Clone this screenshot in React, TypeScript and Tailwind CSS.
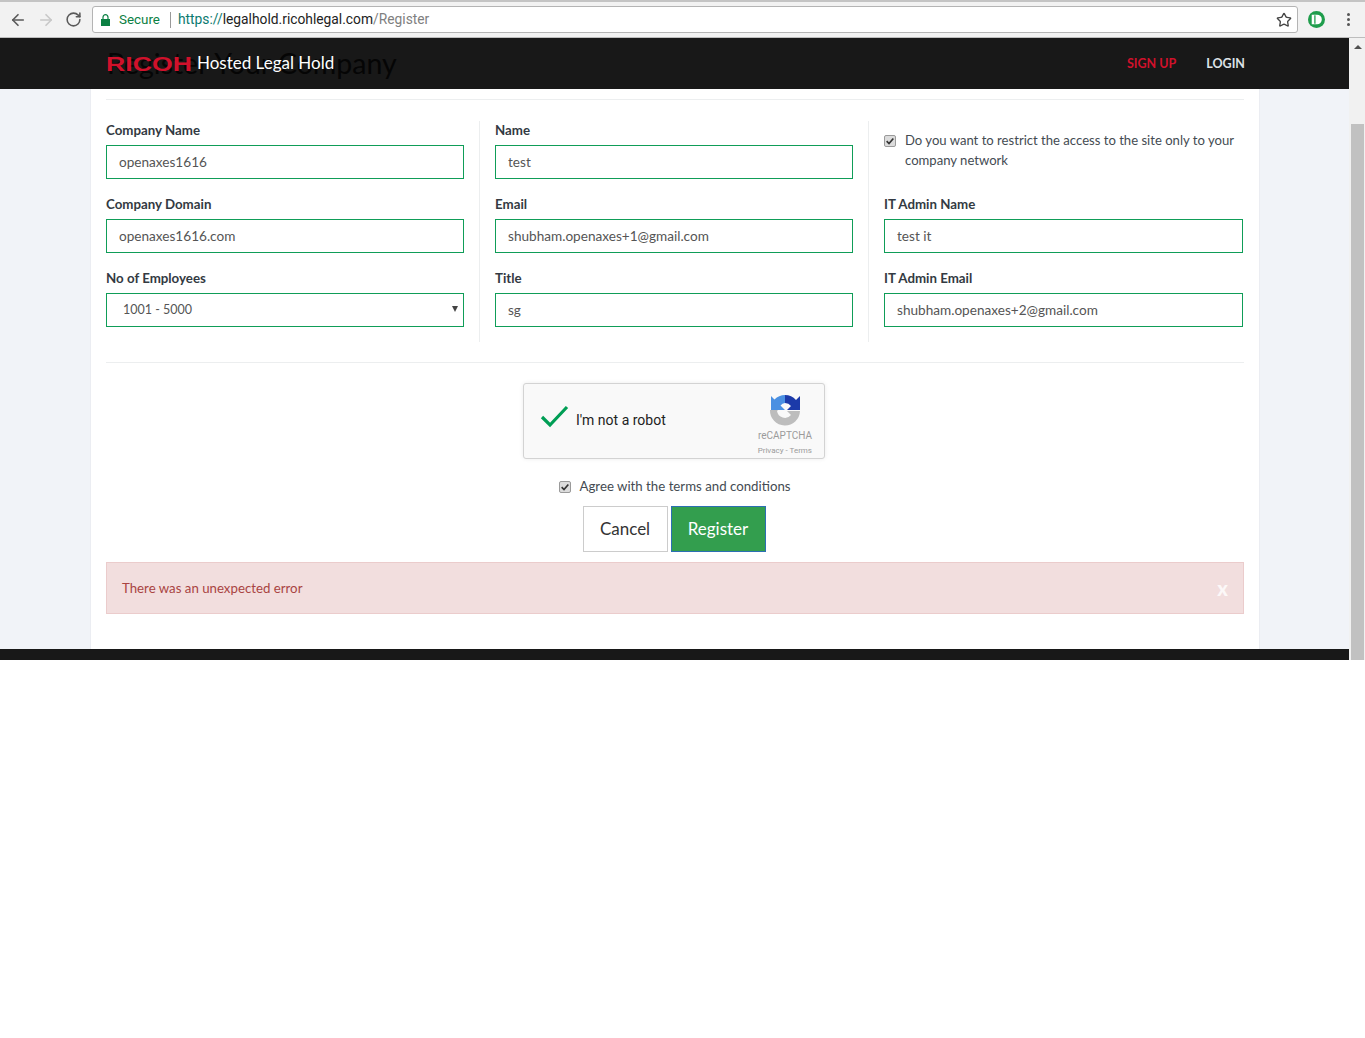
import React from 'react'
import { ArrowLeft, ArrowRight, RotateCw, Star } from 'lucide-react'

type FieldProps = {
  label: string
  value: string
}

const Field: React.FC<FieldProps> = ({ label, value }) => (
  <div className="h-[74px]">
    <label className="block h-[24px] text-[13.3px] leading-[18px] font-bold text-[#333a42]">{label}</label>
    <input
      readOnly
      value={value}
      className="block w-full h-[34px] border border-[#0f9d58] px-3 text-[13.6px] text-[#555] outline-none"
    />
  </div>
)

const Tick = () => (
  <span className="flex items-center justify-center w-[12px] h-[12px] shrink-0 rounded-[2px] border border-[#9a9a9a] bg-[#dcdcdc]">
    <svg viewBox="0 0 12 12" className="w-[10px] h-[10px]">
      <path d="M2 6.2 4.800 9 10 3" fill="none" stroke="#333" strokeWidth="2" />
    </svg>
  </span>
)

const Chrome = () => (
  <div className="h-[38px] shrink-0 flex items-center bg-[#f2f2f2] border-t-2 border-t-[#c4c4c4] border-b border-b-[#bdbdbd] font-['Roboto',sans-serif]">
    <div className="flex items-center w-[92px] pl-[9px] gap-[10px] text-[#5a5a5a]">
      <ArrowLeft size={18} strokeWidth={2.2} />
      <ArrowRight size={18} strokeWidth={2.2} className="text-[#c8c8c8]" />
      <RotateCw size={17} strokeWidth={2.2} />
    </div>
    <div className="flex items-center w-[1206px] h-[27px] bg-white border border-[#b4b4b4] rounded-[3px] text-[13.8px]">
      <svg viewBox="0 0 9 12" className="ml-[8px] w-[9px] h-[12px]">
        <path d="M2 5V3.200a2.500 2.500 0 0 1 5 0V5" fill="none" stroke="#0b8043" strokeWidth="1.200" />
        <rect x="0" y="5" width="9" height="7" fill="#0b8043" />
      </svg>
      <span className="ml-[9px] pt-[1px] text-[13.4px] text-[#0b8043]">Secure</span>
      <span className="ml-[10px] mr-[7px] h-[16px] border-l border-[#999]" />
      <span className="text-[#0b7a6f]">https://</span>
      <span className="text-[#222]">legalhold.ricohlegal.com</span>
      <span className="text-[#808080]">/Register</span>
      <Star size={16} strokeWidth={2} className="ml-auto mr-[5px] text-[#444]" />
    </div>
    <svg viewBox="0 0 16 16" className="ml-[10px] w-[17px] h-[17px]">
      <circle cx="8" cy="8" r="8" fill="#1f9d4c" />
      <path d="M3.500 3.500H8.500a4.500 4.500 0 0 1 0 9H3.500z" fill="#fff" />
      <path d="M6.500 4v8" stroke="#1f9d4c" strokeWidth="1.200" />
    </svg>
    <div className="ml-[22px] flex flex-col gap-[2px]">
      <span className="w-[3px] h-[3px] rounded-full bg-[#555]" />
      <span className="w-[3px] h-[3px] rounded-full bg-[#555]" />
      <span className="w-[3px] h-[3px] rounded-full bg-[#555]" />
    </div>
  </div>
)

const Captcha = () => (
  <div className="flex w-[302px] h-[76px] rounded-[3px] border border-[#d3d3d3] bg-[#f9f9f9] shadow-[0_0_4px_rgba(0,0,0,0.08)] font-['Roboto',sans-serif]">
    <svg viewBox="0 0 30 24" className="w-[30px] h-[24px] ml-[16px] mt-[21px]">
      <path d="M2 12 10 20 27 2" fill="none" stroke="#009e55" strokeWidth="3.2" />
    </svg>
    <span className="ml-[6px] mt-[27px] text-[14px] leading-[18px] text-[#222]">I'm not a robot</span>
    <div className="ml-auto w-[70px] mr-[12px] flex flex-col items-end">
      <svg viewBox="0 0 32 32" className="w-[32px] h-[32px] mt-[10px] mr-[11px]">
        <path d="M16 1a15 15 0 0 0-10.500 4.500L2 2v14h14l-4.500-4.500A7 7 0 0 1 16 9z" fill="#4a90e2" />
        <path d="M16 1a15 15 0 0 1 11 5l4-4v14H18l4-4a8 8 0 0 0-6-3z" fill="#1c3aa9" />
        <path d="M1 16h8l-1 1a8 8 0 0 0 14 4l-4-4h13a15 15 0 0 1-30-1z" fill="#bdbdbd" />
      </svg>
      <span className="mt-[4px] text-[10px] leading-[12px] text-[#9b9b9b]">reCAPTCHA</span>
      <span className="mt-[4px] text-[8px] leading-[10px] text-[#9b9b9b]">Privacy - Terms</span>
    </div>
  </div>
)

export default function App() {
  return (
    <div className="h-[1038px] bg-white font-['Lato','Liberation_Sans',sans-serif]">
      <Chrome />
      <div className="flex h-[622px]">
        <div className="flex-1 flex flex-col min-w-0">
          <nav className="relative h-[51px] shrink-0 flex items-center bg-[#181818] pl-[106px] pr-[104px]">
            <span className="absolute left-[107px] top-[6px] text-[28.500px] leading-[38px] text-[#050505] font-['Lato',sans-serif]">
              Register Your Company
            </span>
            <span className="relative w-[86px] origin-left scale-x-[1.27] font-['Liberation_Sans',sans-serif] text-[21px] leading-none font-bold text-[#d0112b]">
              RICOH
            </span>
            <span className="relative ml-[5px] pb-[1px] text-[17px] text-white">Hosted Legal Hold</span>
            <span className="relative ml-auto pt-[1px] text-[12.500px] font-bold text-[#d0112b]">SIGN UP</span>
            <span className="relative ml-[30px] pt-[1px] text-[12.500px] font-bold text-[#dde2e6]">LOGIN</span>
          </nav>
          <div className="flex-1 bg-[#f1f3f8] pl-[90px] pr-[89px] min-h-0">
            <div className="h-full bg-white border-x border-[#ebedf2] px-[15px] pt-[10px]">
              <div className="border-t border-[#eceeef]" />
              <div className="flex mt-[21px] h-[221px]">
                <div className="w-[358px]">
                  <Field label="Company Name" value="openaxes1616" />
                  <Field label="Company Domain" value="openaxes1616.com" />
                  <div className="h-[74px]">
                    <label className="block h-[24px] text-[13.3px] leading-[18px] font-bold text-[#333a42]">No of Employees</label>
                    <div className="relative">
                      <select className="block w-full h-[34px] appearance-none border border-[#0f9d58] bg-white pl-[16px] text-[12.500px] text-[#555] outline-none">
                        <option>1001 - 5000</option>
                      </select>
                      <span className="absolute right-[6px] top-[13px] border-x-[3.500px] border-t-[6px] border-x-transparent border-t-[#444]" />
                    </div>
                  </div>
                </div>
                <div className="ml-[15px] mr-[15px] border-l border-[#eceeef]" />
                <div className="w-[358px]">
                  <Field label="Name" value="test" />
                  <Field label="Email" value="shubham.openaxes+1@gmail.com" />
                  <Field label="Title" value="sg" />
                </div>
                <div className="ml-[15px] mr-[15px] border-l border-[#eceeef]" />
                <div className="w-[359px]">
                  <div className="h-[74px] flex pt-[9px]">
                    <span className="mt-[5px]">
                      <Tick />
                    </span>
                    <p className="ml-[9px] text-[13.100px] leading-[20px] text-[#444b52]">
                      Do you want to restrict the access to the site only to your company network
                    </p>
                  </div>
                  <Field label="IT Admin Name" value="test it" />
                  <Field label="IT Admin Email" value="shubham.openaxes+2@gmail.com" />
                </div>
              </div>
              <div className="mt-[20px] border-t border-[#eceeef]" />
              <div className="flex flex-col items-center">
                <div className="mt-[20px] mr-[2px]">
                  <Captcha />
                </div>
                <div className="mt-[18px] h-[20px] flex items-center text-[13.250px] text-[#444b52]">
                  <Tick />
                  <span className="ml-[8px]">Agree with the terms and conditions</span>
                </div>
                <div className="mt-[9px] mr-[2px] flex gap-[3px]">
                  <button className="w-[85px] h-[46px] border border-[#cccccc] bg-white text-[17px] text-[#333]">Cancel</button>
                  <button className="w-[95px] h-[46px] border border-[#2c6fb3] bg-[#339e4e] text-[17px] text-white">Register</button>
                </div>
              </div>
              <div className="mt-[10px] h-[52px] flex items-center justify-between border border-[#ebcccc] bg-[#f2dede] pl-[15px] pr-[15px] text-[13.250px] text-[#a94442]">
                <span className="pt-[2px]">There was an unexpected error</span>
                <span className="text-[20px] font-black text-white opacity-80">x</span>
              </div>
            </div>
          </div>
          <div className="h-[11px] shrink-0 bg-[#181818]" />
        </div>
        <div className="relative w-[16px] shrink-0 bg-[#f1f1f1]">
          <span className="absolute left-[5px] top-[7px] border-x-[4px] border-b-[4px] border-x-transparent border-b-[#505050]" />
          <div className="absolute left-[2px] right-[1px] top-[86px] bottom-0 bg-[#c1c1c1]" />
        </div>
      </div>
    </div>
  )
}
